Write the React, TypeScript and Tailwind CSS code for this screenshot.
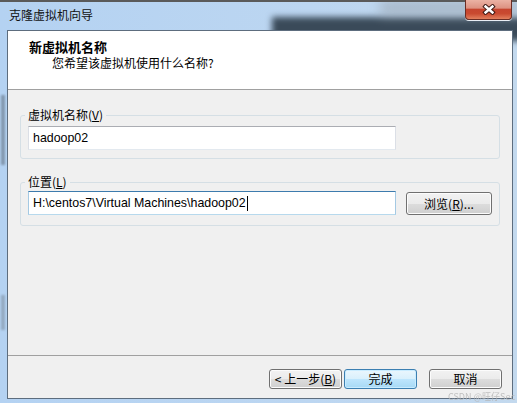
const cjk = "font-['Noto_Sans_CJK_SC','Noto_Sans',sans-serif]";
const latin = "font-['Liberation_Sans','Noto_Sans_CJK_SC',sans-serif]";

function WinButton({
  children,
  primary,
  className = '',
}: {
  children: React.ReactNode;
  primary?: boolean;
  className?: string;
}) {
  return (
    <button
      type="button"
      className={
        'flex items-center justify-center rounded-[3px] border text-[12px] leading-none text-black ' +
        (primary
          ? 'border-[#3c7fb1] bg-[linear-gradient(#eaf6fd_0%,#d9f0fc_50%,#bee6fd_50%,#a7d9f5_100%)] shadow-[inset_0_0_0_1px_#c9ecff] '
          : 'border-[#707070] bg-[linear-gradient(#f2f2f2_0%,#ebebeb_50%,#dddddd_50%,#cfcfcf_100%)] shadow-[inset_0_0_0_1px_#fcfcfc] ') +
        className
      }
    >
      {children}
    </button>
  );
}

function CloseButton() {
  return (
    <div className="absolute right-[5px] top-0 flex h-[20px] w-[47px] items-center justify-center rounded-b-[4px] border border-t-0 border-[#6b2d24] bg-[linear-gradient(#ebb2a4_0%,#dd9282_42%,#c6452f_50%,#c94a30_72%,#e2805e_100%)] shadow-[0_1px_0_#e9eef5]">
      <svg width="14" height="11" viewBox="0 0 14 11">
        <path d="M3.5 2.5 L10.5 8.5 M10.5 2.5 L3.5 8.5" stroke="#3f1a15" strokeWidth="4.4" strokeLinecap="square" />
        <path d="M3.5 2.5 L10.5 8.5 M10.5 2.5 L3.5 8.5" stroke="#ffffff" strokeWidth="2.4" strokeLinecap="square" />
      </svg>
    </div>
  );
}

export default function App() {
  return (
    <div className={'relative flex h-[403px] w-[517px] flex-col overflow-hidden bg-[linear-gradient(90deg,#b4d2f2_0%,#bcd6f1_60%,#c3d9ee_100%)] ' + cjk}>
      {/* glass behind the title bar */}
      <div className="absolute left-[272px] top-[17px] h-[24px] w-[280px] bg-[#3a4a59] blur-[3px]" />
      <div className="absolute left-[380px] top-[0px] h-[16px] w-[140px] bg-[#9aa6b2] opacity-60 blur-[6px]" />
      <div className="absolute left-[1px] top-[95px] h-[70px] w-[4px] bg-[#6d7f92] opacity-70 blur-[1px]" />
      <div className="absolute left-[1px] top-[295px] h-[35px] w-[4px] bg-[#7d8fa2] opacity-60 blur-[1px]" />
      <div className="absolute inset-x-0 top-0 h-[2px] bg-[#5a5a5a]" />

      {/* title bar */}
      <div className="relative h-[30px] shrink-0 pl-[9px] pt-[7px] text-[12px] leading-[16px] text-[#111]">
        克隆虚拟机向导
        <CloseButton />
      </div>

      {/* client area */}
      <div className="relative mb-[4px] ml-[7px] mr-[4px] flex flex-1 flex-col border border-[#5d6d7e] bg-[#f0f0f0]">
        <div className="h-[59px] shrink-0 border-b border-[#a0a0a0] bg-white pl-[21px] pt-[8px]">
          <div className="text-[13px] font-bold leading-[16px] text-black">新虚拟机名称</div>
          <div className="pl-[23px] text-[12px] leading-[16px] text-black">您希望该虚拟机使用什么名称?</div>
        </div>

        <div className="flex-1 px-[12px] pt-[17px]">
          <fieldset className="rounded-[3px] border border-[#d5dfe5] pb-[8px] pl-[4px] pt-[3px]">
            <legend className="px-[3px] text-[12px] leading-[16px] text-black">
              虚拟机名称(<span className="underline">V</span>)
            </legend>
            <div className="pl-[3px]">
              <div className={'flex h-[24px] w-[368px] items-center border border-[#abadb3] border-x-[#dbdfe6] border-b-[#e3e9ef] bg-white pl-[4px] text-[12.4px] text-black ' + latin}>
                hadoop02
              </div>
            </div>
          </fieldset>

          <fieldset className="mt-[15px] rounded-[3px] border border-[#d5dfe5] pb-[10px] pl-[4px] pt-[1px]">
            <legend className="px-[3px] text-[12px] leading-[16px] text-black">
              位置(<span className="underline">L</span>)
            </legend>
            <div className="flex items-start pl-[3px]">
              <div className={'flex h-[24px] w-[368px] items-center border border-[#3d7bad] border-x-[#a4c9e3] border-b-[#b7d9ed] bg-white pl-[4px] text-[12.4px] text-black ' + latin}>
                H:\centos7\Virtual Machines\hadoop02
                <span className="ml-px inline-block h-[15px] w-px bg-black" />
              </div>
              <WinButton className="ml-[10px] mt-[1px] h-[23px] w-[86px]">
                浏览(<span className="underline">R</span>)...
              </WinButton>
            </div>
          </fieldset>
        </div>

        <div className="flex h-[43px] shrink-0 items-start justify-end border-t border-[#a0a0a0] pr-[10px] pt-[13px]">
          <WinButton className="h-[20px] w-[73px]">
            &lt; 上一步(<span className="underline">B</span>)
          </WinButton>
          <WinButton primary className="ml-[2px] h-[20px] w-[73px]">
            完成
          </WinButton>
          <WinButton className="ml-[12px] h-[20px] w-[73px]">
            取消
          </WinButton>
        </div>
      </div>

      <div className="absolute bottom-[1px] right-[2px] text-[9px] leading-[10px] text-[#b4b4b4] opacity-80">
        CSDN @旺仔Sec
      </div>
    </div>
  );
}
